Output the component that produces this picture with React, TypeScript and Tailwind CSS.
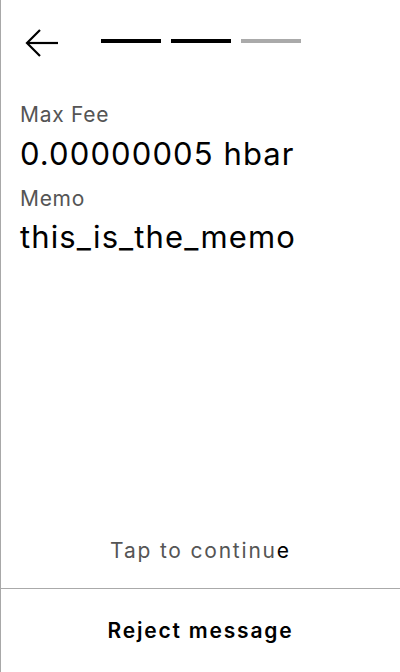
import React from "react";

export default function App() {
  return (
    <div className="w-[400px] h-[672px] bg-white border-l border-[#a8a8a8] flex flex-col" style={{ fontFamily: "Inter, 'Noto Sans', sans-serif" }}>
      <div className="flex items-center h-[86px] pl-[24px]">
        <svg width="34" height="30" viewBox="0 0 34 30" fill="none" stroke="#000" strokeWidth="2.2">
          <path d="M33 15 H3" />
          <path d="M15 2 L2 15 L15 28" />
        </svg>
        <div className="flex gap-[10px] ml-[42px] -mt-[4px]">
          <div className="w-[60px] h-[4px] bg-black" />
          <div className="w-[60px] h-[4px] bg-black" />
          <div className="w-[60px] h-[4px] bg-[#aaaaaa]" />
        </div>
      </div>
      <div className="flex flex-col pl-[19px] pt-[14px]">
        <div className="text-[21px] leading-[30px] tracking-[0.7px] text-[#555555]">Max Fee</div>
        <div className="text-[31px] leading-[40px] tracking-[1.1px] text-black mt-[4px]">0.00000005 hbar</div>
        <div className="text-[21px] leading-[30px] tracking-[0.7px] text-[#555555] mt-[10px]">Memo</div>
        <div className="text-[31px] leading-[40px] tracking-[1.1px] text-black mt-[3px]">this_is_the_memo</div>
      </div>
      <div className="flex-1" />
      <div className="text-center text-[21px] leading-[30px] tracking-[1.8px] text-[#555555] pb-[22px]">
        Tap to continu<span className="text-black">e</span>
      </div>
      <div className="border-t border-[#aaaaaa] h-[84px] flex items-center justify-center">
        <span className="text-[21px] tracking-[1.8px] font-semibold text-black">Reject message</span>
      </div>
    </div>
  );
}
